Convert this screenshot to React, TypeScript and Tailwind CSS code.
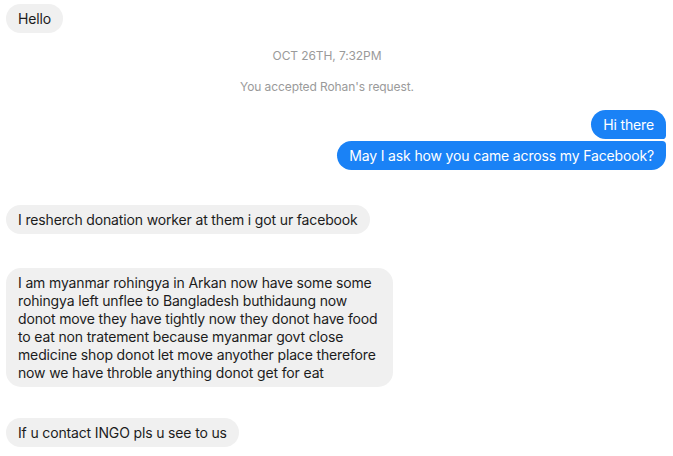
type Msg = { text: string; mine?: boolean; pos?: "first" | "last" | "single" };

function Bubble({ text, mine, pos = "single" }: Msg) {
  const corners = mine
    ? pos === "first"
      ? "rounded-[15px] rounded-br-[4px]"
      : pos === "last"
        ? "rounded-[15px] rounded-tr-[4px]"
        : "rounded-[15px]"
    : "rounded-[15px]";
  return (
    <div className={`flex ${mine ? "justify-end" : "justify-start"}`}>
      <div
        className={`max-w-[387px] px-3 py-[5.5px] text-[14px] leading-[18px] tracking-[-0.15px] ${corners} ${
          mine ? "bg-[#1a82f6] text-white" : "bg-[#f0f0f0] text-[#1c1c1c]"
        }`}
      >
        {text}
      </div>
    </div>
  );
}

export default function App() {
  return (
    <div
      className="h-[456px] w-[673px] overflow-hidden bg-white pl-[6px] pr-[7px] pt-1"
      style={{ fontFamily: 'Inter, "Liberation Sans", Arial, sans-serif' }}
    >
      <Bubble text="Hello" />

      {/* system lines */}
      <div className="mt-[15px] pr-[18px] text-center text-[12px] leading-[16px] tracking-[-0.1px] text-[#9a9a9a]">
        OCT 26TH, 7:32PM
      </div>
      <div className="mt-[15px] pr-[18px] text-center text-[12px] leading-[16px] tracking-[-0.1px] text-[#9a9a9a]">
        You accepted Rohan's request.
      </div>

      <div className="mt-[15px] flex flex-col gap-[2px]">
        <Bubble text="Hi there" mine pos="first" />
        <Bubble text="May I ask how you came across my Facebook?" mine pos="last" />
      </div>

      <div className="mt-[35px]">
        <Bubble text="I resherch donation worker at them i got ur facebook" />
      </div>

      <div className="mt-[34px]">
        <Bubble text="I am myanmar rohingya in Arkan now have some some rohingya left unflee to Bangladesh buthidaung now donot move they have tightly now they donot have food to eat non tratement because myanmar govt close medicine shop donot let move anyother place therefore now we have throble anything donot get for eat" />
      </div>

      <div className="mt-[31px]">
        <Bubble text="If u contact INGO pls u see to us" />
      </div>
    </div>
  );
}
